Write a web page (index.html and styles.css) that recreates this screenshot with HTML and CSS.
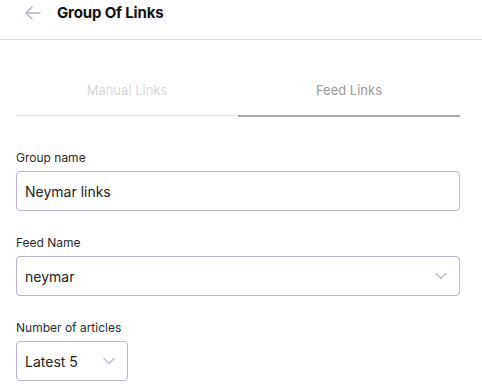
FILE: index.html
```html
<!DOCTYPE html>
<html lang="en">
<head>
    <meta charset="UTF-8">
    <meta name="viewport" content="width=device-width, initial-scale=1.0">
    <title>Group Of Links</title>
    <link rel="stylesheet" href="styles.css">
</head>
<body>
    <header class="top-bar">
        <svg class="back-icon" width="16" height="14" viewBox="0 0 16 14" fill="none">
            <path d="M15 7H1.5M7 1L1 7l6 6" stroke="#b3aed0" stroke-width="1.4" stroke-linecap="round" stroke-linejoin="round"/>
        </svg>
        <h1>Group Of Links</h1>
    </header>

    <main class="content">
        <nav class="tabs">
            <div class="tab">Manual Links</div>
            <div class="tab active">Feed Links</div>
        </nav>

        <div class="field">
            <label>Group name</label>
            <div class="box">Neymar links</div>
        </div>

        <div class="field">
            <label>Feed Name</label>
            <div class="box select">
                <span>neymar</span>
                <svg width="12" height="8" viewBox="0 0 12 8" fill="none"><path d="M1 1.5l5 5 5-5" stroke="#bab5d4" stroke-width="1.2" stroke-linecap="round" stroke-linejoin="round"/></svg>
            </div>
        </div>

        <div class="field">
            <label>Number of articles</label>
            <div class="box select small">
                <span>Latest 5</span>
                <svg width="12" height="8" viewBox="0 0 12 8" fill="none"><path d="M1 1.5l5 5 5-5" stroke="#bab5d4" stroke-width="1.2" stroke-linecap="round" stroke-linejoin="round"/></svg>
            </div>
        </div>
    </main>
</body>
</html>
```

FILE: styles.css
```css
body {
    margin: 0;
    font-family: Inter, "Noto Sans", sans-serif;
    color: #1f1f1f;
    background: #fff;
}

.top-bar {
    height: 40px;
    box-sizing: border-box;
    display: flex;
    align-items: flex-start;
    padding-left: 25px;
    border-bottom: 1px solid #dcd9e6;
}

.back-icon {
    margin-top: 6px;
}

.top-bar > h1 {
    margin: 3px 0 0 16px;
    font-size: 15px;
    line-height: 20px;
    font-weight: 700;
    letter-spacing: -0.15px;
    color: #111;
}

.content {
    padding: 0 22px 0 16px;
}

.tabs {
    display: flex;
    align-items: flex-start;
    margin-top: 24px;
}

.tab {
    flex: 1;
    text-align: center;
    font-size: 13px;
    line-height: 16px;
    padding: 18px 0 17px;
    color: #d9d9d9;
    border-bottom: 1px solid #dedede;
}

.tab.active {
    color: #999;
    border-bottom: 2px solid #a8a8a8;
}

.field {
    display: flex;
    flex-direction: column;
    margin-top: 33px;
}

.field + .field {
    margin-top: 24px;
}

.field > label {
    font-size: 12px;
    line-height: 16px;
    color: #2a2a2a;
    margin-bottom: 5px;
}

.box {
    height: 40px;
    box-sizing: border-box;
    border: 1px solid #b7b2d2;
    border-radius: 4px;
    padding: 0 12px 0 8px;
    display: flex;
    align-items: center;
    justify-content: space-between;
    font-size: 14px;
    color: #222;
}

.box.small {
    width: 112px;
}
```
